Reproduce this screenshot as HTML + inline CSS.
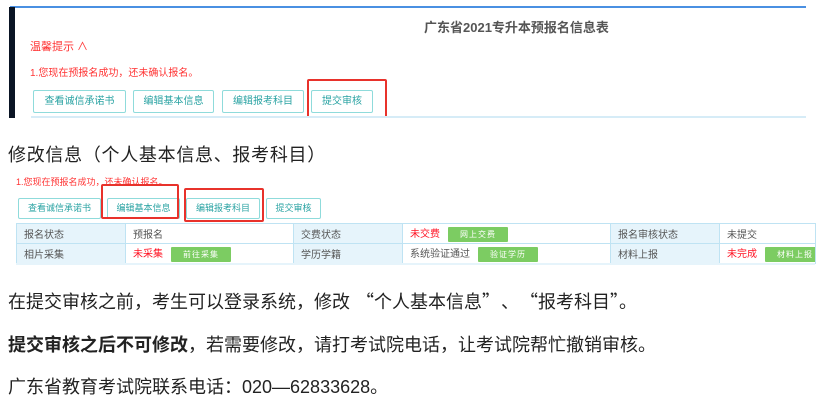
<!DOCTYPE html>
<html><head><meta charset="utf-8"><style>
*{margin:0;padding:0;box-sizing:border-box}
body{width:824px;height:402px;background:#fff;position:relative;overflow:hidden;font-family:"Liberation Sans","Noto Sans CJK SC",sans-serif;color:#222}
.a{position:absolute;white-space:nowrap}
.btn{position:absolute;border:1px solid #8fdbdb;border-radius:2px;color:#2aa3a3;text-align:center;background:#fff}
.rb{position:absolute;border:2px solid #e8322b;border-radius:2px}
table{position:absolute;border-collapse:collapse;font-size:10px;color:#555;table-layout:fixed}
td{border:1px solid #bfe3f3;height:20px;padding-left:7px;white-space:nowrap;overflow:hidden}
td.l{background:#e6f4fb}
.g{display:inline-block;background:#7ccc62;color:#fff;font-size:8px;padding:2px 12px;margin-left:8px;border-radius:1px;letter-spacing:1px}
.r{color:#f12}
p{position:absolute;left:8px;font-size:18px;white-space:nowrap;color:#222}
.q{font-family:"Noto Sans CJK SC",sans-serif}
</style></head><body>
<div class="a" style="left:10px;top:6px;width:796px;height:2px;background:#4a90e2"></div>
<div class="a" style="left:9px;top:7px;width:6px;height:111px;background:#0a1424"></div>
<div class="a" style="left:424px;top:17px;font-size:13px;font-weight:bold;color:#555">广东省2021专升本预报名信息表</div>
<div class="a" style="left:30px;top:38px;font-size:11px;color:#f33">温馨提示 ∧</div>
<div class="a" style="left:30px;top:64px;font-size:10px;color:#f33">1.您现在预报名成功，还未确认报名。</div>
<div class="btn" style="left:33px;top:90px;width:93px;height:23px;font-size:10px;line-height:21px">查看诚信承诺书</div>
<div class="btn" style="left:133px;top:90px;width:81px;height:23px;font-size:10px;line-height:21px">编辑基本信息</div>
<div class="btn" style="left:222px;top:90px;width:82px;height:23px;font-size:10px;line-height:21px">编辑报考科目</div>
<div class="btn" style="left:311px;top:90px;width:62px;height:23px;font-size:10px;line-height:21px">提交审核</div>
<div class="rb" style="left:307px;top:79px;width:80px;height:39px"></div>
<div class="a" style="left:31px;top:116px;width:775px;height:2px;background:#d6ecf7"></div>

<p style="top:141px;font-size:18px;letter-spacing:0.7px">修改信息<span class="q">（</span>个人基本信息、报考科目<span class="q">）</span></p>

<div class="a" style="left:16px;top:175px;font-size:9px;color:#f33">1.您现在预报名成功，还未确认报名。</div>
<div class="btn" style="left:18px;top:198px;width:83px;height:21px;font-size:9px;line-height:19px">查看诚信承诺书</div>
<div class="btn" style="left:107px;top:198px;width:73px;height:21px;font-size:9px;line-height:19px">编辑基本信息</div>
<div class="btn" style="left:186px;top:198px;width:74px;height:21px;font-size:9px;line-height:19px">编辑报考科目</div>
<div class="btn" style="left:266px;top:198px;width:55px;height:21px;font-size:9px;line-height:19px">提交审核</div>
<div class="rb" style="left:101px;top:184px;width:78px;height:35px"></div>
<div class="rb" style="left:184px;top:188px;width:80px;height:34px"></div>
<table style="left:16px;top:223px;width:799px">
<colgroup><col style="width:109px"><col style="width:168px"><col style="width:109px"><col style="width:208px"><col style="width:109px"><col style="width:96px"></colgroup>
<tr><td class="l">报名状态</td><td>预报名</td><td class="l">交费状态</td><td><span class="r">未交费</span><span class="g">网上交费</span></td><td class="l">报名审核状态</td><td>未提交</td></tr>
<tr><td class="l">相片采集</td><td><span class="r">未采集</span><span class="g">前往采集</span></td><td class="l">学历学籍</td><td>系统验证通过<span class="g">验证学历</span></td><td class="l">材料上报</td><td><span class="r">未完成</span><span class="g">材料上报</span></td></tr>
</table>
<div class="a" style="left:16px;top:263px;width:799px;height:2px;background:#e6f4fb"></div>

<p style="top:288px">在提交审核之前，考生可以登录系统，修改<span class="q" style="margin-left:6px">“</span>个人基本信息<span class="q">”</span><span style="margin:0 10px">、</span><span class="q">“</span>报考科目<span class="q">”</span>。</p>
<p style="top:331px"><b>提交审核之后不可修改</b>，若需要修改，请打考试院电话，让考试院帮忙撤销审核。</p>
<p style="top:373px">广东省教育考试院联系电话：020—62833628。</p>
</body></html>
